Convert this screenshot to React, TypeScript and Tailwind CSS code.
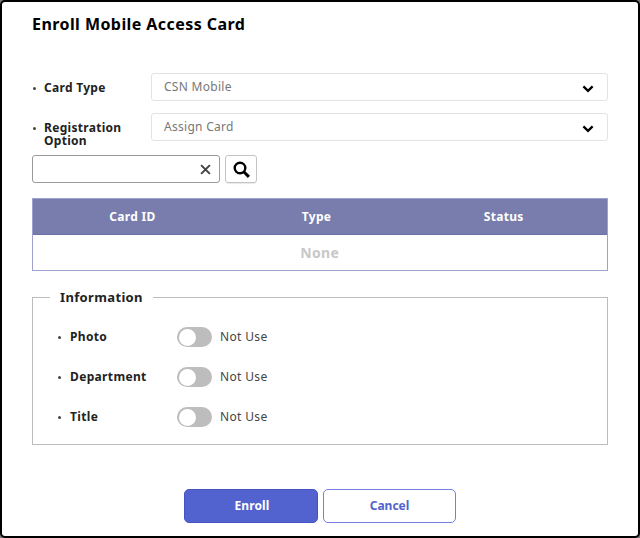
import React from 'react';

function Chevron() {
  return (
    <svg width="12" height="8" viewBox="0 0 12 8" fill="none" className="mt-[3px]">
      <path d="M1.4 1.4 L6 5.8 L10.6 1.4" stroke="#000" strokeWidth="2.3" />
    </svg>
  );
}

function Dot() {
  return <span className="h-[3px] w-[3px] shrink-0 rounded-full bg-[#444]" />;
}

function SelectRow({ label, value }: { label: React.ReactNode; value: string }) {
  return (
    <div className="flex h-7 items-start">
      <div className="flex w-[119.5px] shrink-0 items-start">
        <div className="flex h-[31px] items-center pl-px">
          <Dot />
        </div>
        <div className="ml-[8.5px] pt-[9px] text-[12px] leading-[12.5px] font-bold tracking-[0.3px] text-[#222]">{label}</div>
      </div>
      <div className="flex h-7 flex-1 items-center justify-between rounded-[3px] border border-[#e3e3e3] pr-[13.5px] pl-3">
        <span className="text-[12px] leading-4 tracking-[0.28px] text-[#777]">{value}</span>
        <Chevron />
      </div>
    </div>
  );
}

function ToggleRow({ label }: { label: string }) {
  return (
    <div className="flex h-5 items-center">
      <Dot />
      <span className="ml-[9px] w-[107px] text-[12px] leading-4 font-bold tracking-[0.35px] text-[#222]">{label}</span>
      <span className="flex h-5 w-[35px] items-center rounded-full bg-[#bdbdbd] pl-[1.5px]">
        <span className="h-[17px] w-[17px] rounded-full bg-white" />
      </span>
      <span className="ml-[8px] text-[12px] leading-4 tracking-[0.35px] text-[#444]">Not Use</span>
    </div>
  );
}

export default function App() {
  return (
    <div className="h-[538px] w-[640px] overflow-hidden bg-[#777] font-['Noto_Sans',sans-serif]">
      <div className="flex h-full w-full flex-col rounded-[5px] border-2 border-black bg-white pr-[30px] pl-[29.5px]">
        <h1 className="mt-[10px] ml-[0.5px] text-[16px] leading-6 font-bold tracking-[0.43px] whitespace-nowrap text-black">
          Enroll Mobile Access Card
        </h1>
        <div className="mt-[37px] flex flex-col gap-3">
          <SelectRow label="Card Type" value="CSN Mobile" />
          <SelectRow label={<>Registration<br />Option</>} value="Assign Card" />
        </div>
        <div className="mt-[14px] flex h-7 gap-[5px]">
          <div className="flex w-[188.5px] items-center justify-end rounded-[3px] border border-[#999] pr-[8px]">
            <svg width="11" height="11" viewBox="0 0 10 10">
              <path d="M1 1 L9 9 M9 1 L1 9" stroke="#444" strokeWidth="1.8" />
            </svg>
          </div>
          <div className="flex w-8 items-center justify-center rounded-[3px] border border-[#c4c4c4] shadow-[0_2px_1px_-1px_#e8e8e8]">
            <svg width="17" height="17" viewBox="0 0 17 17" fill="none" stroke="#000">
              <circle cx="7" cy="7" r="5.3" strokeWidth="2.4" />
              <path d="M10.8 10.8 L15.9 15.9" strokeWidth="3" />
            </svg>
          </div>
        </div>
        <div className="mt-[15px] flex h-[73px] flex-col border border-[#9fa2cf]">
          <div className="grid h-9 grid-cols-[200px_168px_1fr] items-center border-b border-[#6c70a5] bg-[#787dad] text-center text-[12px] font-bold tracking-[0.3px] text-white">
            <span>Card ID</span>
            <span>Type</span>
            <span>Status</span>
          </div>
          <div className="flex flex-1 items-center justify-center text-[14px] font-bold tracking-[0.4px] text-[#c8c8c8]">None</div>
        </div>
        <fieldset className="mt-[16px] h-[158px] border border-[#bcbcbc] pl-[25.5px]">
          <legend className="-ml-[8px] px-[10px] text-[13px] leading-5 font-bold tracking-[0.35px] text-[#222]">Information</legend>
          <div className="mt-5 flex flex-col gap-5">
            <ToggleRow label="Photo" />
            <ToggleRow label="Department" />
            <ToggleRow label="Title" />
          </div>
        </fieldset>
        <div className="mt-[44px] flex h-[34px] justify-center gap-[5px] pl-px text-[12px] font-bold">
          <button className="w-[133.5px] rounded-[5px] border border-[#4454c4] bg-[#5263cf] pl-[2px] tracking-[0.1px] text-white">Enroll</button>
          <button className="w-[133.5px] rounded-[5px] border border-[#7480dc] bg-white text-[#5362cd]">Cancel</button>
        </div>
      </div>
    </div>
  );
}
